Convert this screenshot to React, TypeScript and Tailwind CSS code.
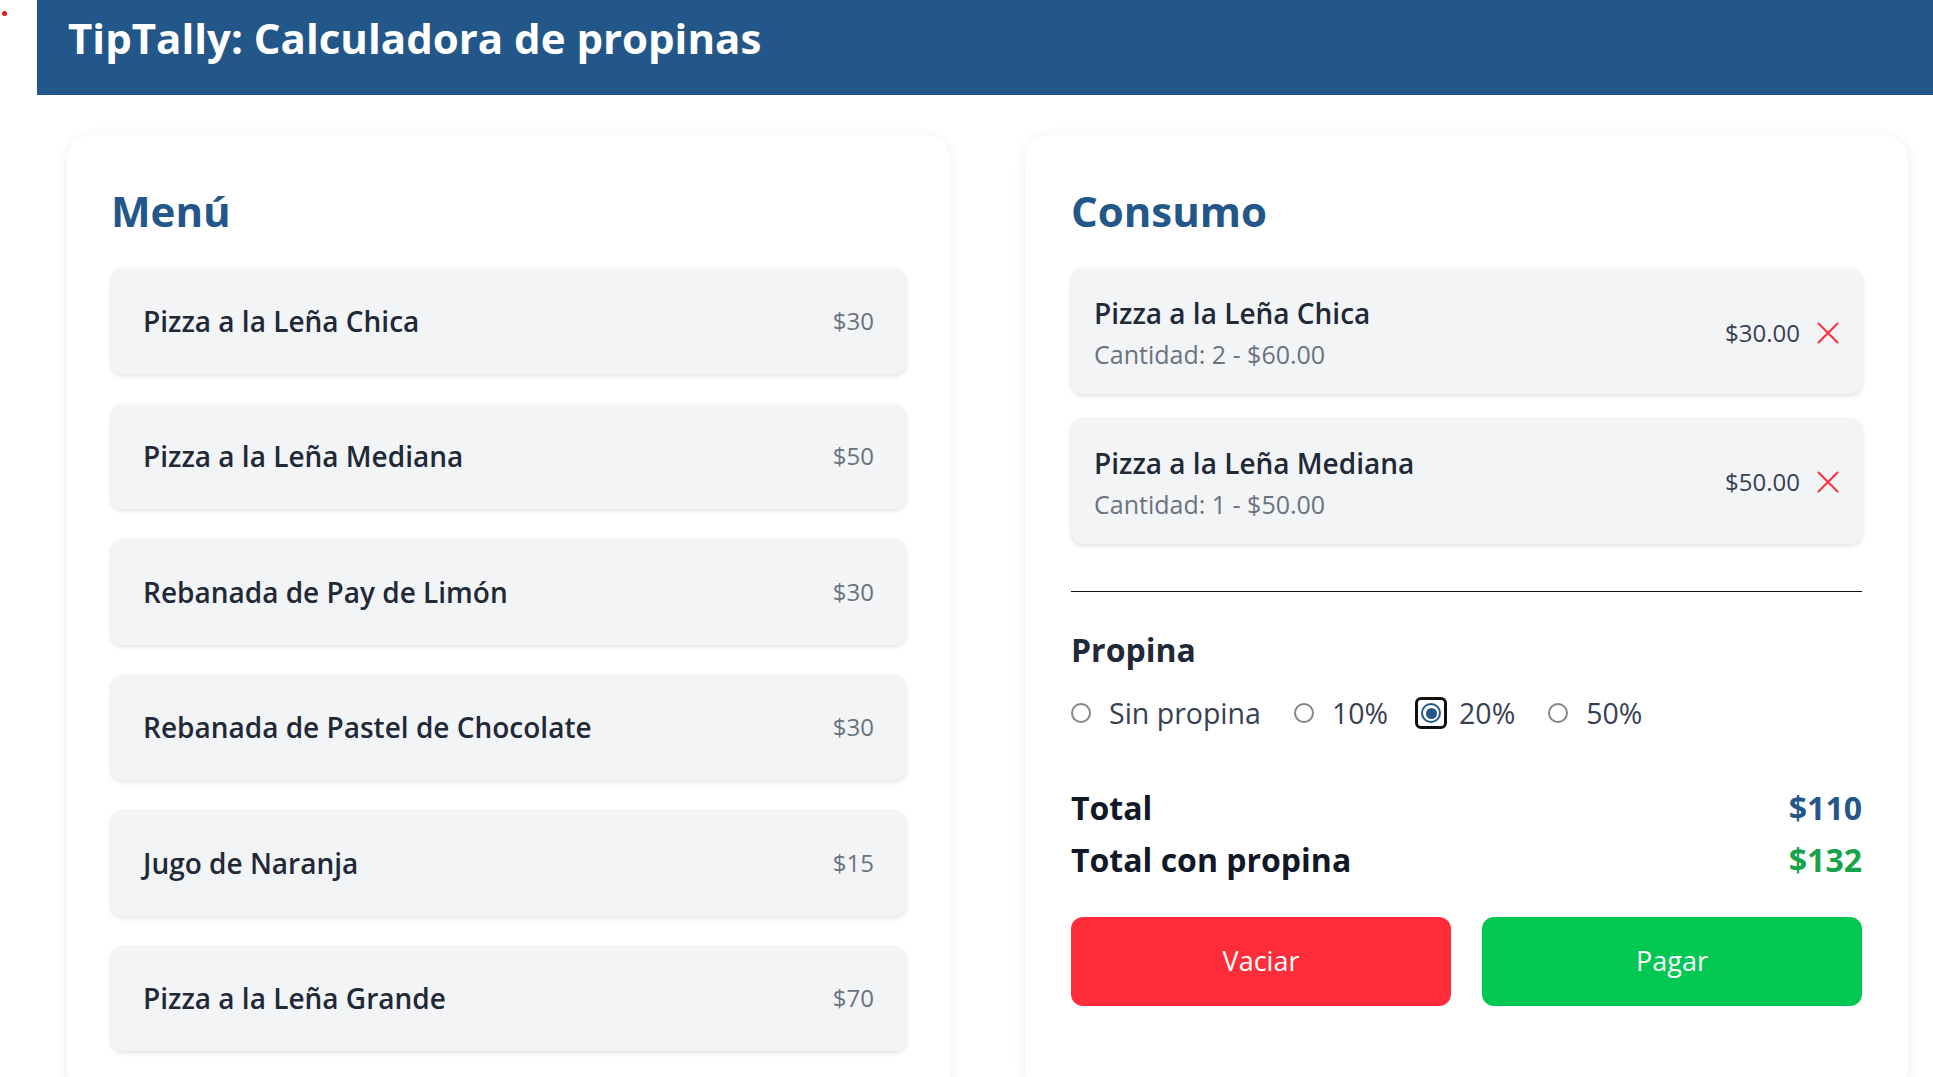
import React from "react";

const menu = [
  { id: 1, name: "Pizza a la Leña Chica", price: 30 },
  { id: 2, name: "Pizza a la Leña Mediana", price: 50 },
  { id: 3, name: "Rebanada de Pay de Limón", price: 30 },
  { id: 4, name: "Rebanada de Pastel de Chocolate", price: 30 },
  { id: 5, name: "Jugo de Naranja", price: 15 },
  { id: 6, name: "Pizza a la Leña Grande", price: 70 },
];

const order = [
  { id: 1, name: "Pizza a la Leña Chica", price: 30, qty: 2 },
  { id: 2, name: "Pizza a la Leña Mediana", price: 50, qty: 1 },
];

const tips = [
  { id: "0", label: "Sin propina" },
  { id: "10", label: "10%" },
  { id: "20", label: "20%" },
  { id: "50", label: "50%" },
];

const CloseIcon = () => (
  <svg width="22" height="22" viewBox="0 0 22 22" fill="none">
    <path d="M1.5 1.5 20.5 20.5M20.5 1.5 1.5 20.5" stroke="#ff2d3d" strokeWidth="2" strokeLinecap="round" />
  </svg>
);

const Radio = ({ checked }: { checked: boolean }) => (
  <span className="relative flex h-[20px] w-[20px] shrink-0 items-center justify-center">
    {checked ? (
      <>
        <span className="absolute -inset-[6px] rounded-[6px] border-[3px] border-[#111]" />
        <span className="flex h-[20px] w-[20px] items-center justify-center rounded-full border-2 border-[#245789] bg-white">
          <span className="h-[11px] w-[11px] rounded-full bg-[#245789]" />
        </span>
      </>
    ) : (
      <span className="h-[20px] w-[20px] rounded-full border-2 border-[#858585] bg-white" />
    )}
  </span>
);

export default function App() {
  const selected = "20";
  const total = order.reduce((acc, i) => acc + i.price * i.qty, 0);

  return (
    <div className="flex min-h-screen bg-white font-['Open_Sans',sans-serif]">
      <div className="w-[37px] shrink-0 pl-[2px] pt-[11px]">
        <div className="h-[5px] w-[5px] rounded-full bg-[#e3191c]" />
      </div>

      <div className="flex-1">
        <header className="h-[95px] bg-[#245789] pl-[31px] pt-[13px]">
          <h1 className="text-[42px] font-bold leading-[50px] text-white">TipTally: Calculadora de propinas</h1>
        </header>

        <main className="grid grid-cols-2 gap-[75px] pl-[30px] pr-[25px] pt-[40px]">
          {/* Menu */}
          <section className="rounded-3xl bg-white px-[44px] pt-[51px] pb-[44px] shadow-[0_2px_14px_rgba(0,0,0,0.07)]">
            <h2 className="mb-[32px] text-[42px] font-bold leading-[50px] text-[#245789]">Menú</h2>
            <div className="flex flex-col gap-[30px]">
              {menu.map((item) => (
                <button
                  key={item.id}
                  className="flex h-[105.5px] items-center justify-between rounded-xl bg-[#f3f4f6] px-[32px] shadow-[0_2px_5px_rgba(0,0,0,0.12)]"
                >
                  <span className="text-[28px] font-semibold leading-[40px] text-[#1f2937]">{item.name}</span>
                  <span className="text-[24px] leading-[36px] text-[#6b7280]">${item.price}</span>
                </button>
              ))}
            </div>
          </section>

          {/* Consumo */}
          <section className="rounded-3xl bg-white px-[46px] pt-[51px] pb-[44px] shadow-[0_2px_14px_rgba(0,0,0,0.07)]">
            <h2 className="mb-[32px] text-[42px] font-bold leading-[50px] text-[#245789]">Consumo</h2>
            <div className="flex flex-col gap-[23.5px]">
              {order.map((item) => (
                <div
                  key={item.id}
                  className="flex items-center justify-between rounded-xl bg-[#f3f4f6] pb-[22px] pl-[23px] pr-[23px] pt-[25px] shadow-[0_2px_5px_rgba(0,0,0,0.12)]"
                >
                  <div>
                    <p className="text-[28px] font-semibold leading-[40px] text-[#1f2937]">{item.name}</p>
                    <p className="mt-[3px] text-[25px] leading-[36px] text-[#6b7280]">
                      Cantidad: {item.qty} - ${(item.price * item.qty).toFixed(2)}
                    </p>
                  </div>
                  <div className="flex items-center gap-[17px]">
                    <span className="text-[24px] leading-[36px] text-[#374151]">${item.price.toFixed(2)}</span>
                    <CloseIcon />
                  </div>
                </div>
              ))}
            </div>

            <div className="mt-[47.5px] h-px bg-[#111]" />

            <h3 className="mt-[39px] text-[32px] font-bold leading-[38px] text-[#1f2937]">Propina</h3>
            <div className="mt-[24px] flex items-center gap-[33px]">
              {tips.map((t) => (
                <label key={t.id} className="flex items-center gap-[18px]">
                  <Radio checked={t.id === selected} />
                  <span className="text-[28.5px] leading-[40px] text-[#374151]">{t.label}</span>
                </label>
              ))}
            </div>

            <div className="mt-[56px] flex flex-col gap-[13.5px]">
              <div className="flex items-center justify-between text-[32px] font-bold leading-[38px]">
                <span className="text-[#111827]">Total</span>
                <span className="text-[#245789]">${total}</span>
              </div>
              <div className="flex items-center justify-between text-[32px] font-bold leading-[38px]">
                <span className="text-[#111827]">Total con propina</span>
                <span className="text-[#16a34a]">${total + total * 0.2}</span>
              </div>
            </div>

            <div className="mt-[38px] grid grid-cols-2 gap-[31px]">
              <button className="h-[89px] rounded-xl bg-[#ff2d3a] text-[27px] text-white">Vaciar</button>
              <button className="h-[89px] rounded-xl bg-[#00c853] text-[27px] text-white">Pagar</button>
            </div>
          </section>
        </main>
      </div>
    </div>
  );
}
